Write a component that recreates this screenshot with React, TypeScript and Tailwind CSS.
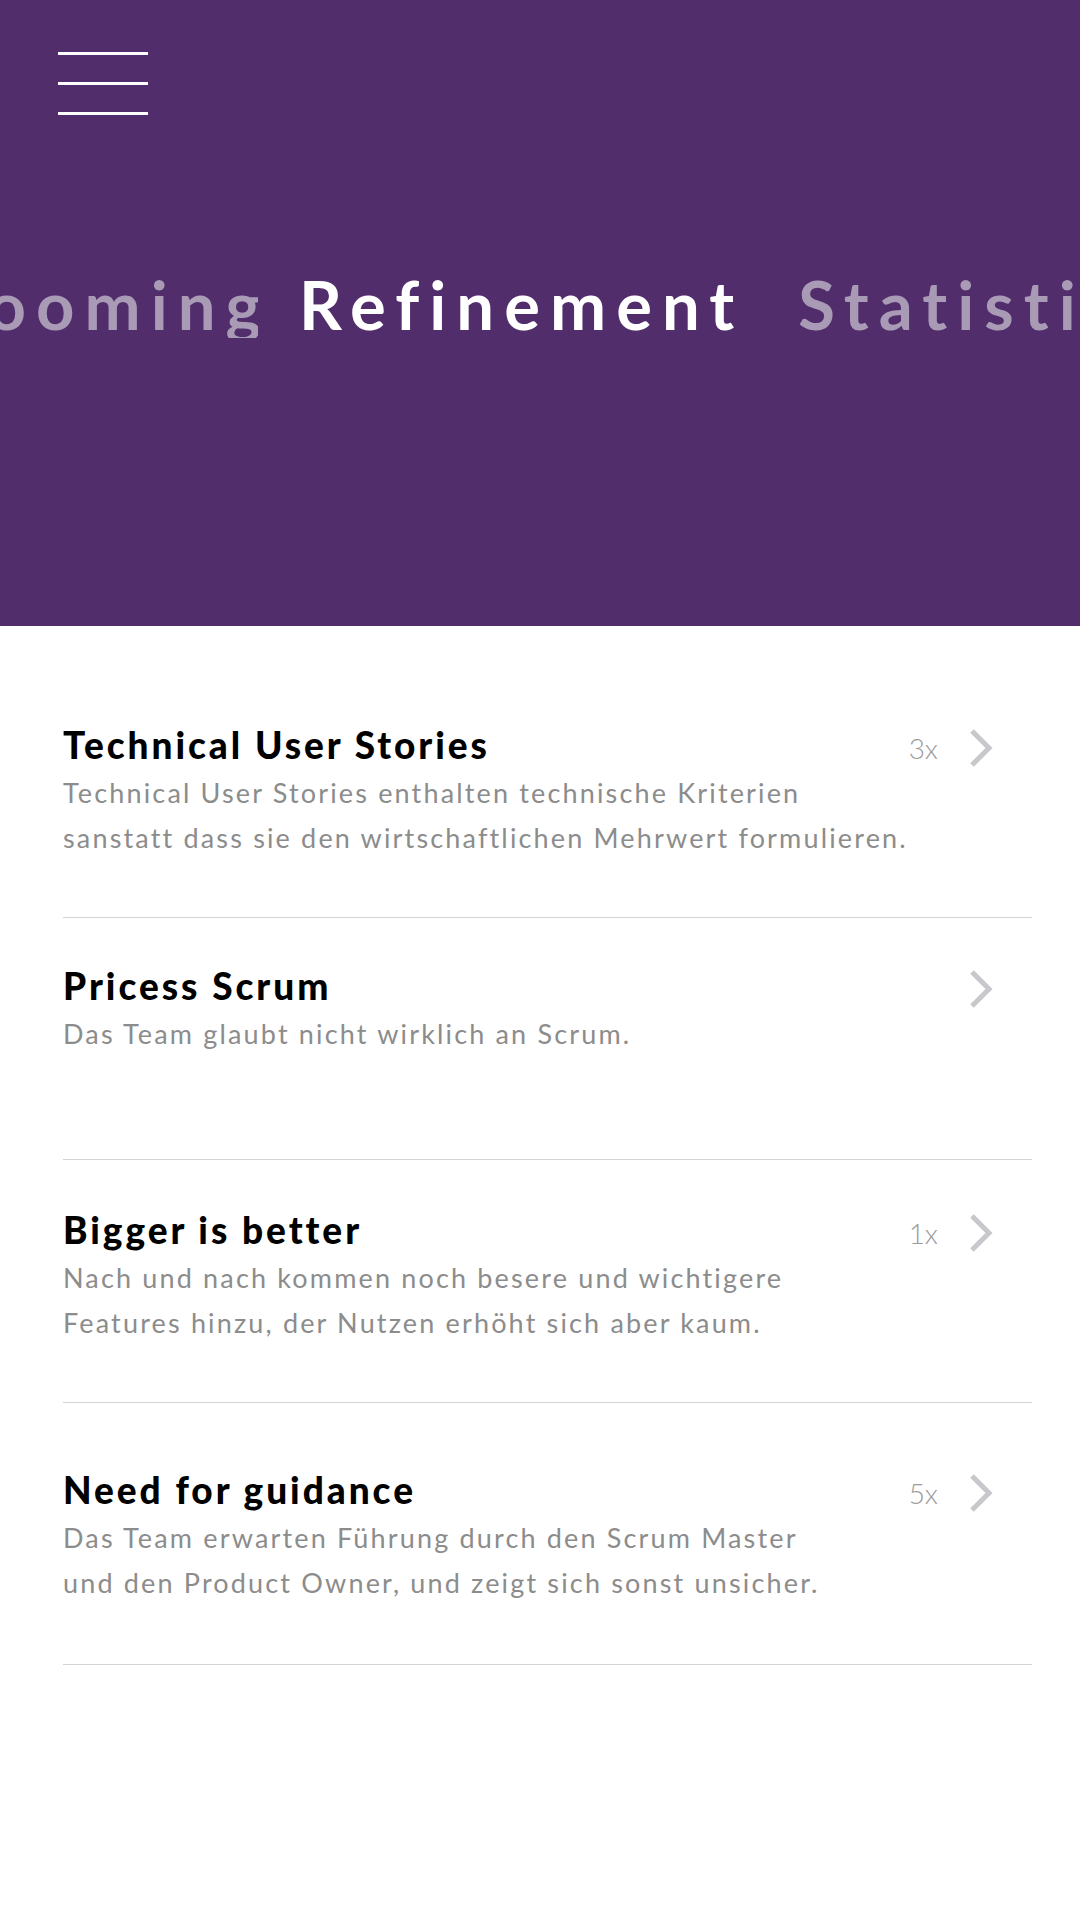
const tabs = ["Grooming", "Refinement", "Statistics"];

const items = [
  {
    title: "Technical User Stories",
    lines: [
      "Technical User Stories enthalten technische Kriterien",
      "sanstatt dass sie den wirtschaftlichen Mehrwert formulieren.",
    ],
    count: "3x",
    row: "h-[242px] pt-[47px]",
  },
  {
    title: "Pricess Scrum",
    lines: ["Das Team glaubt nicht wirklich an Scrum."],
    count: "",
    row: "h-[242px] pt-[46px]",
  },
  {
    title: "Bigger is better",
    lines: [
      "Nach und nach kommen noch besere und wichtigere",
      "Features hinzu, der Nutzen erhöht sich aber kaum.",
    ],
    count: "1x",
    row: "h-[243px] pt-[48px]",
  },
  {
    title: "Need for guidance",
    lines: [
      "Das Team erwarten Führung durch den Scrum Master",
      "und den Product Owner, und zeigt sich sonst unsicher.",
    ],
    count: "5x",
    row: "h-[262px] pt-[65px]",
  },
];

function Chevron() {
  return (
    <svg width="24" height="38" viewBox="0 0 24 38" fill="none" className="ml-[31px] shrink-0">
      <path d="M3 2 L20 19 L3 36" stroke="#c7c7cc" strokeWidth={5} />
    </svg>
  );
}

export default function App() {
  return (
    <div className="min-h-screen w-full bg-white font-['Lato',sans-serif]">
      {/* header with tab carousel */}
      <header className="h-[626px] bg-[#522d6c] overflow-hidden">
        <div className="pt-[52px] pl-[58px] flex flex-col gap-[27px]">
          <span className="block h-[3px] w-[90px] bg-white" />
          <span className="block h-[3px] w-[90px] bg-white" />
          <span className="block h-[3px] w-[90px] bg-white" />
        </div>

        <div className="mt-[156px] flex items-baseline whitespace-nowrap text-[67px] font-bold leading-none tracking-[0.15em]">
          <div className="w-[258px] shrink-0 flex justify-end overflow-hidden">
            <span className="text-[#a99bb5] -mr-[13px]">{tabs[0]}</span>
          </div>
          <span className="ml-[41px] text-white">{tabs[1]}</span>
          <span className="ml-[54px] text-[#a99bb5]">{tabs[2]}</span>
        </div>
      </header>

      {/* list */}
      <ul className="pt-[50px] pl-[63px] pr-[48px]">
        {items.map((item) => (
          <li
            key={item.title}
            className={`flex items-start border-b border-[#d4d4d4] ${item.row}`}
          >
            <div className="flex-1">
              <h3 className="text-[37px] leading-[44px] font-black tracking-[0.08em] text-black">
                {item.title}
              </h3>
              <p className="mt-[3px] text-[27px] leading-[45px] tracking-[0.08em] text-[#8c8c8c]">
                {item.lines.map((l) => (
                  <span key={l} className="block">
                    {l}
                  </span>
                ))}
              </p>
            </div>
            <div className="h-[44px] pt-[6px] pr-[39px] flex items-center">
              <span className="text-[28px] font-light text-[#9b9b9b]">{item.count}</span>
              <Chevron />
            </div>
          </li>
        ))}
      </ul>
    </div>
  );
}
